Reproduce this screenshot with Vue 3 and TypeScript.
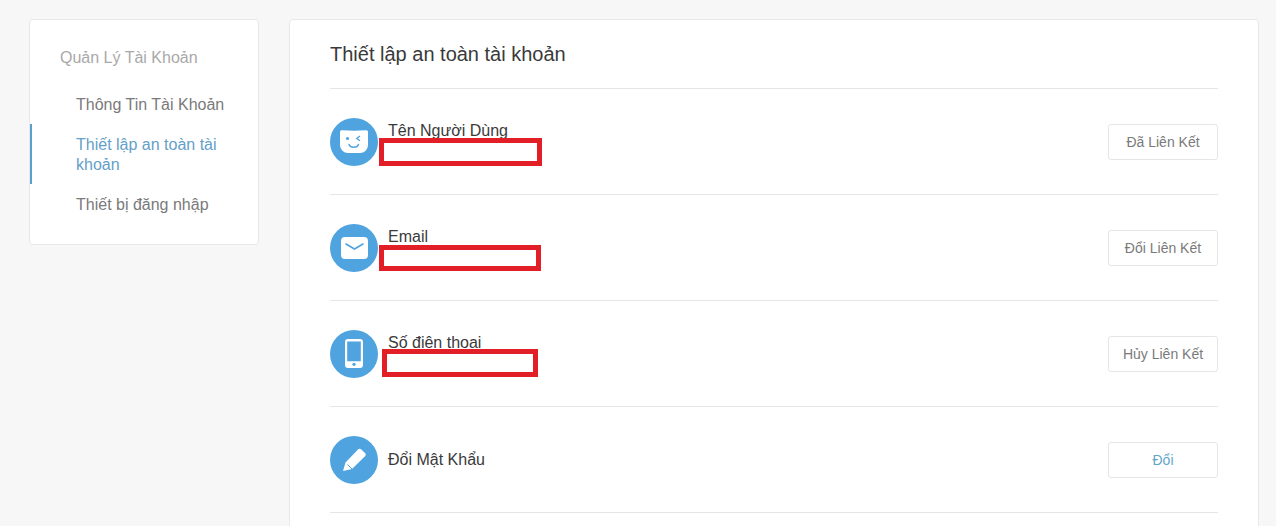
<template>
  <div class="page">
    <aside class="side">
      <div class="side-title">Quản Lý Tài Khoản</div>
      <a
        v-for="item in menu"
        :key="item.label"
        class="side-item"
        :class="{ active: item.active }"
      >{{ item.label }}</a>
    </aside>

    <main class="panel">
      <h2 class="panel-title">Thiết lập an toàn tài khoản</h2>

      <div v-for="row in rows" :key="row.label" class="row">
        <div class="icon">
          <svg v-if="row.icon === 'face'" width="28" height="23" viewBox="0 0 28 23">
            <path d="M0 2 Q0 0 2 .3 Q14 1.2 26 .3 Q28 0 28 2 V15 a8 8 0 0 1 -8 8 H8 a8 8 0 0 1 -8 -8 Z" fill="#fff" />
            <circle cx="7.5" cy="8.5" r="1.6" fill="#4fa3de" />
            <path d="M20 6 L16.8 8.5 L20 10.8" fill="none" stroke="#4fa3de" stroke-width="1.4" />
            <path d="M9 14.5 a5 4 0 0 0 9.5 0" fill="none" stroke="#4fa3de" stroke-width="1.4" stroke-linecap="round" />
          </svg>
          <svg v-else-if="row.icon === 'mail'" width="27" height="22" viewBox="0 0 27 22">
            <rect width="27" height="22" rx="4" fill="#fff" />
            <path d="M5 7 L13.5 12 L22 7" fill="none" stroke="#4fa3de" stroke-width="1.6" stroke-linecap="round" />
          </svg>
          <svg v-else-if="row.icon === 'phone'" width="18" height="29" viewBox="0 0 18 29">
            <path fill-rule="evenodd" fill="#fff" d="M3 0 H15 a3 3 0 0 1 3 3 V26 a3 3 0 0 1 -3 3 H3 a3 3 0 0 1 -3 -3 V3 a3 3 0 0 1 3 -3 Z M2.2 2.5 V22.3 H15.8 V2.5 Z" />
            <circle cx="9" cy="25.3" r="1.6" fill="#4fa3de" />
          </svg>
          <svg v-else width="23" height="23" viewBox="0 0 23 23">
            <path d="M0 23 L2.5 14.5 L15 1.5 a2.5 2.5 0 0 1 3.3 0 L22 5 a2.5 2.5 0 0 1 0 3.3 L9 21 Z" fill="#fff" />
            <path d="M4.5 16.5 L9 21" stroke="#4fa3de" stroke-width="1" fill="none" />
          </svg>
        </div>
        <div class="info">
          <div class="label">{{ row.label }}</div>
        </div>
        <button class="btn" :class="{ primary: row.primary }">{{ row.action }}</button>
        <div v-if="row.mask" class="mask" :class="row.mask"></div>
      </div>
    </main>
  </div>
</template>

<script setup lang="ts">
interface MenuItem {
  label: string
  active?: boolean
}

interface Row {
  icon: string
  label: string
  action: string
  mask?: string
  primary?: boolean
}

const menu: MenuItem[] = [
  { label: 'Thông Tin Tài Khoản' },
  { label: 'Thiết lập an toàn tài khoản', active: true },
  { label: 'Thiết bị đăng nhập' }
]

const rows: Row[] = [
  { icon: 'face', label: 'Tên Người Dùng', action: 'Đã Liên Kết', mask: 'mask-name' },
  { icon: 'mail', label: 'Email', action: 'Đổi Liên Kết', mask: 'mask-mail' },
  { icon: 'phone', label: 'Số điện thoại', action: 'Hủy Liên Kết', mask: 'mask-phone' },
  { icon: 'pen', label: 'Đổi Mật Khẩu', action: 'Đổi', primary: true }
]
</script>

<style>
html,
body {
  margin: 0;
  background: #f7f7f7;
  overflow: hidden;
}
</style>

<style scoped>
.page {
  display: flex;
  align-items: flex-start;
  gap: 30px;
  height: 526px;
  padding: 19px 17px 0 29px;
  box-sizing: border-box;
  overflow: hidden;
  font-family: "Liberation Sans", Arial, sans-serif;
  color: #3a3a3a;
}

.side {
  flex: 0 0 230px;
  box-sizing: border-box;
  height: 226px;
  padding: 26px 0 0;
  background: #fff;
  border: 1px solid #e8e8e8;
  border-radius: 4px;
}

.side-title {
  padding-left: 30px;
  margin-bottom: 14px;
  font-size: 16px;
  line-height: 24px;
  color: #a9a9a9;
}

.side-item {
  display: block;
  padding: 11px 30px 9px 46px;
  font-size: 16px;
  line-height: 20px;
  color: #7a7a7a;
}

.side-item.active {
  color: #64a0c8;
  border-left: 2px solid #5b9fcb;
  padding-left: 44px;
}

.panel {
  flex: 0 0 970px;
  box-sizing: border-box;
  height: 560px;
  padding: 0 40px;
  background: #fff;
  border: 1px solid #e8e8e8;
  border-radius: 4px;
}

.panel-title {
  margin: 0;
  height: 69px;
  box-sizing: border-box;
  padding-top: 21px;
  font-size: 20px;
  line-height: 26px;
  font-weight: 400;
  color: #3a3a3a;
  border-bottom: 1px solid #e6e6e6;
}

.row {
  position: relative;
  display: flex;
  align-items: center;
  height: 106px;
  box-sizing: border-box;
  border-bottom: 1px solid #e6e6e6;
}

.icon {
  flex: 0 0 48px;
  display: flex;
  align-items: center;
  justify-content: center;
  width: 48px;
  height: 48px;
  border-radius: 50%;
  background: #4fa3de;
  margin-right: 10px;
}

.info {
  flex: 1;
  align-self: flex-start;
  padding-top: 32px;
}

.row:last-child .info {
  padding-top: 0;
  align-self: center;
}

.label {
  font-size: 16px;
  line-height: 20px;
  color: #3a3a3a;
}

.btn {
  width: 110px;
  height: 36px;
  padding: 0;
  font-family: inherit;
  font-size: 14px;
  color: #7a7a7a;
  background: #fff;
  border: 1px solid #e6e6e6;
  border-radius: 3px;
}

.btn.primary {
  color: #64a6c8;
}

.mask {
  position: absolute;
  box-sizing: border-box;
  border: 5px solid #e21f26;
  background: #fff;
}

.mask-name {
  left: 49px;
  top: 49px;
  width: 163px;
  height: 28px;
}

.mask-mail {
  left: 49px;
  top: 50px;
  width: 162px;
  height: 26px;
}

.mask-phone {
  left: 52px;
  top: 48px;
  width: 156px;
  height: 28px;
}
</style>
